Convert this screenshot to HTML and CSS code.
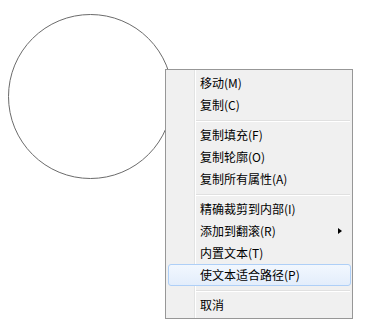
FILE: index.html
```html
<!DOCTYPE html>
<html lang="zh-CN">
<head>
<meta charset="utf-8">
<title>Context menu</title>
<link rel="stylesheet" href="styles.css">
</head>
<body>
<div class="canvas">
  <svg class="shape" width="366" height="332" viewBox="0 0 366 332" aria-hidden="true">
    <circle cx="90.5" cy="96.5" r="82" fill="#fff" stroke="#6b6b6b" stroke-width="1"/>
  </svg>
  <div class="menu">
    <div class="item">移动(M)</div>
    <div class="item">复制(C)</div>
    <div class="sep"></div>
    <div class="item">复制填充(F)</div>
    <div class="item">复制轮廓(O)</div>
    <div class="item">复制所有属性(A)</div>
    <div class="sep"></div>
    <div class="item">精确裁剪到内部(I)</div>
    <div class="item has-sub">添加到翻滚(R)<span class="arrow"></span></div>
    <div class="item">内置文本(T)</div>
    <div class="item hover">使文本适合路径(P)</div>
    <div class="sep"></div>
    <div class="item">取消</div>
  </div>
</div>
</body>
</html>
```
FILE: styles.css
```css
html, body {
  margin: 0;
  padding: 0;
  background: #fff;
}

.canvas {
  position: relative;
  width: 366px;
  height: 332px;
  overflow: hidden;
  font-family: "Noto Sans CJK SC", "Microsoft YaHei", sans-serif;
  font-size: 12px;
  color: #000;
}

.shape {
  display: block;
}

.menu {
  position: absolute;
  left: 165px;
  top: 69px;
  width: 186px;
  padding: 2px 0;
  background: #f0f0f0;
  border: 1px solid #979797;
  display: flex;
  flex-direction: column;
}

.menu::before {
  content: "";
  position: absolute;
  left: 28px;
  top: 0;
  bottom: 0;
  width: 1px;
  background: #e2e3e3;
  border-right: 1px solid #ffffff;
}

.item {
  position: relative;
  z-index: 1;
  display: flex;
  align-items: center;
  height: 20px;
  line-height: 20px;
  margin: 0 1px 0 2px;
  padding-left: 31px;
  border: 1px solid transparent;
  border-radius: 3px;
  white-space: nowrap;
}

.item.hover {
  border-color: #aecff7;
  background: linear-gradient(#f2f7fe, #e3edfb);
}

.arrow {
  margin-left: auto;
  margin-right: 8px;
  width: 0;
  height: 0;
  border-left: 4px solid #000;
  border-top: 3.5px solid transparent;
  border-bottom: 3.5px solid transparent;
}

.sep {
  position: relative;
  z-index: 1;
  height: 8px;
  margin: 0 2px 0 30px;
}

.sep::before {
  content: "";
  position: absolute;
  left: 0;
  right: 0;
  top: 4px;
  height: 0;
  border-top: 1px solid #e0e0e0;
  border-bottom: 1px solid #ffffff;
}
```
